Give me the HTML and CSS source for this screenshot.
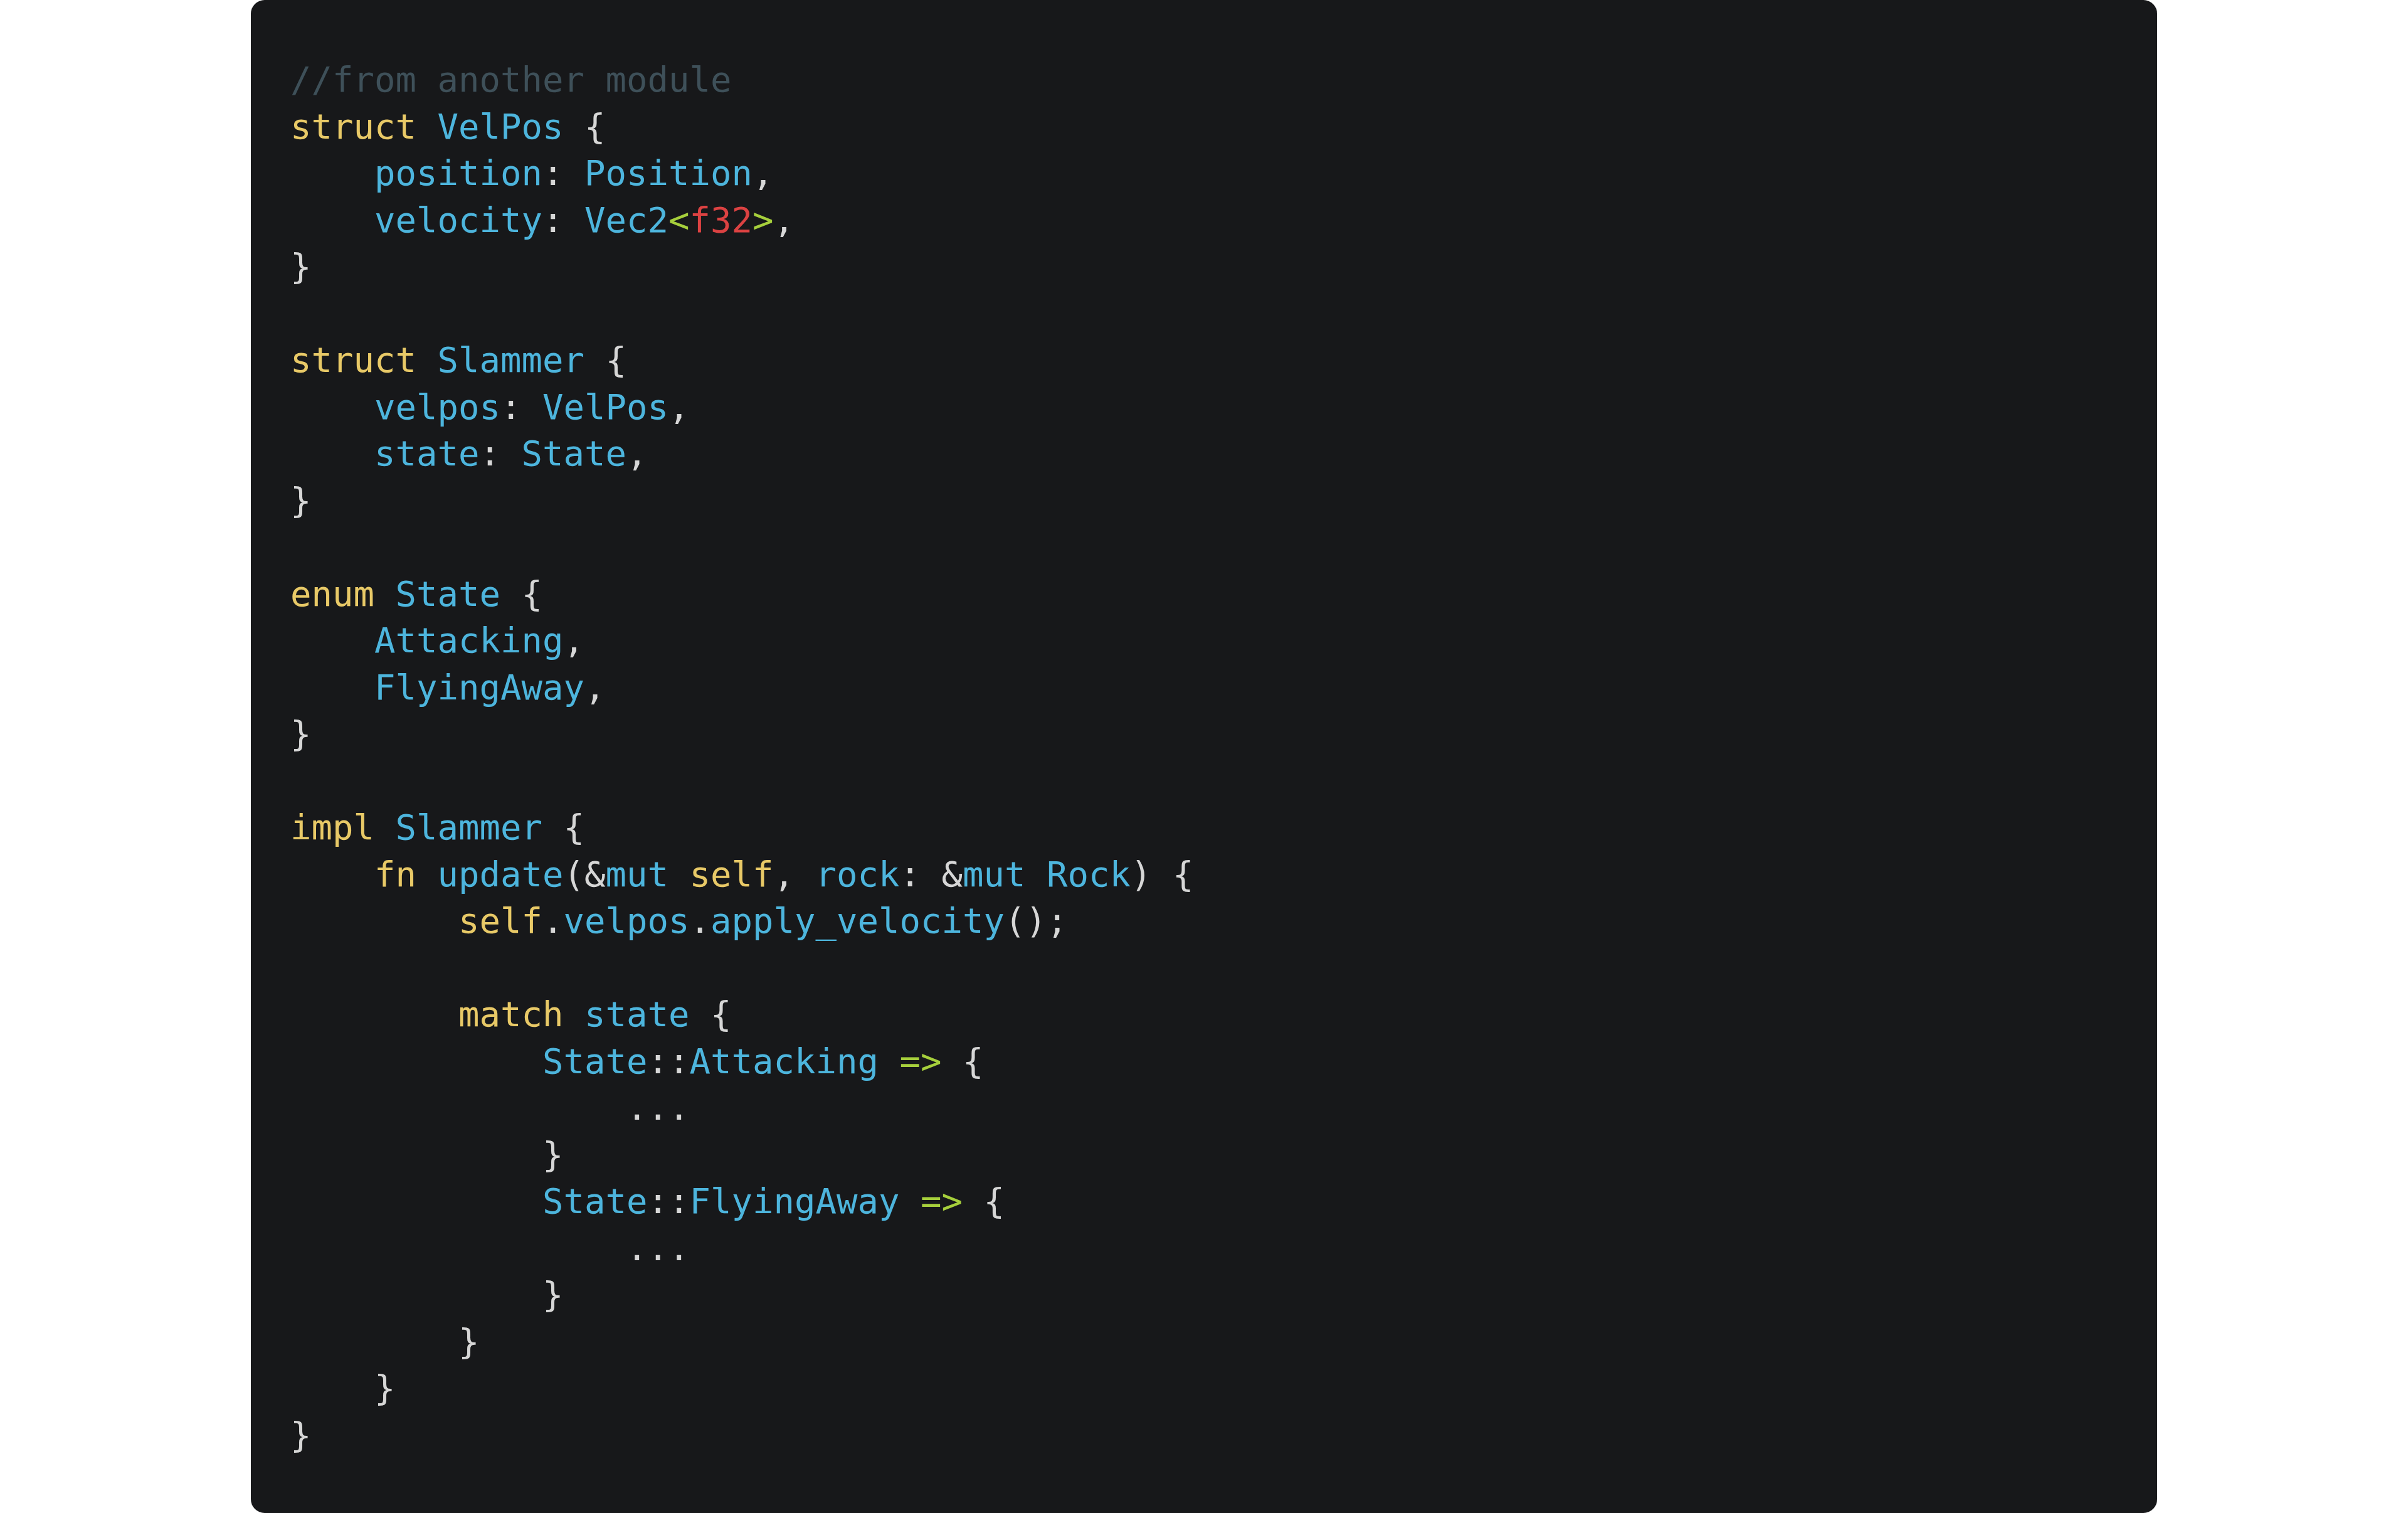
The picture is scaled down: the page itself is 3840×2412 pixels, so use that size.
FILE: index.html
```html
<!DOCTYPE html>
<html lang="en">
<head>
<meta charset="utf-8">
<title>Code</title>
<link rel="stylesheet" href="styles.css">
</head>
<body>
<main class="page">
<pre class="code"><code><span class="cm">//from another module</span>
<span class="kw">struct</span> <span class="id">VelPos</span> <span class="pn">{</span>
    <span class="id">position</span><span class="pn">:</span> <span class="id">Position</span><span class="pn">,</span>
    <span class="id">velocity</span><span class="pn">:</span> <span class="id">Vec2</span><span class="op">&lt;</span><span class="nm">f32</span><span class="op">&gt;</span><span class="pn">,</span>
<span class="pn">}</span>

<span class="kw">struct</span> <span class="id">Slammer</span> <span class="pn">{</span>
    <span class="id">velpos</span><span class="pn">:</span> <span class="id">VelPos</span><span class="pn">,</span>
    <span class="id">state</span><span class="pn">:</span> <span class="id">State</span><span class="pn">,</span>
<span class="pn">}</span>

<span class="kw">enum</span> <span class="id">State</span> <span class="pn">{</span>
    <span class="id">Attacking</span><span class="pn">,</span>
    <span class="id">FlyingAway</span><span class="pn">,</span>
<span class="pn">}</span>

<span class="kw">impl</span> <span class="id">Slammer</span> <span class="pn">{</span>
    <span class="kw">fn</span> <span class="id">update</span><span class="pn">(&amp;</span><span class="id">mut</span> <span class="kw">self</span><span class="pn">,</span> <span class="id">rock</span><span class="pn">: &amp;</span><span class="id">mut</span> <span class="id">Rock</span><span class="pn">) {</span>
        <span class="kw">self</span><span class="pn">.</span><span class="id">velpos</span><span class="pn">.</span><span class="id">apply_velocity</span><span class="pn">();</span>

        <span class="kw">match</span> <span class="id">state</span> <span class="pn">{</span>
            <span class="id">State</span><span class="pn">::</span><span class="id">Attacking</span> <span class="op">=&gt;</span> <span class="pn">{</span>
                <span class="pn">...</span>
            <span class="pn">}</span>
            <span class="id">State</span><span class="pn">::</span><span class="id">FlyingAway</span> <span class="op">=&gt;</span> <span class="pn">{</span>
                <span class="pn">...</span>
            <span class="pn">}</span>
        <span class="pn">}</span>
    <span class="pn">}</span>
<span class="pn">}</span></code></pre>
</main>
</body>
</html>
```

FILE: styles.css
```css
html, body {
  margin: 0;
  padding: 0;
  background: #ffffff;
}

.page {
  display: flex;
  justify-content: center;
}

.code {
  box-sizing: border-box;
  width: 3040px;
  height: 2412px;
  margin: 0;
  padding: 90px 63px 88px 63px;
  background: #17181a;
  border-radius: 22px;
  font-family: "DejaVu Sans Mono", "Liberation Mono", monospace;
  font-size: 55.65px;
  line-height: 74.5px;
  color: #d6d6d6;
  white-space: pre;
  overflow: hidden;
}

.code code {
  font: inherit;
}

.cm { color: #3e5059; }
.kw { color: #e8c967; }
.id { color: #4db5dd; }
.pn { color: #d6d6d6; }
.nm { color: #dc4242; }
.op { color: #a6cf3c; }
```
